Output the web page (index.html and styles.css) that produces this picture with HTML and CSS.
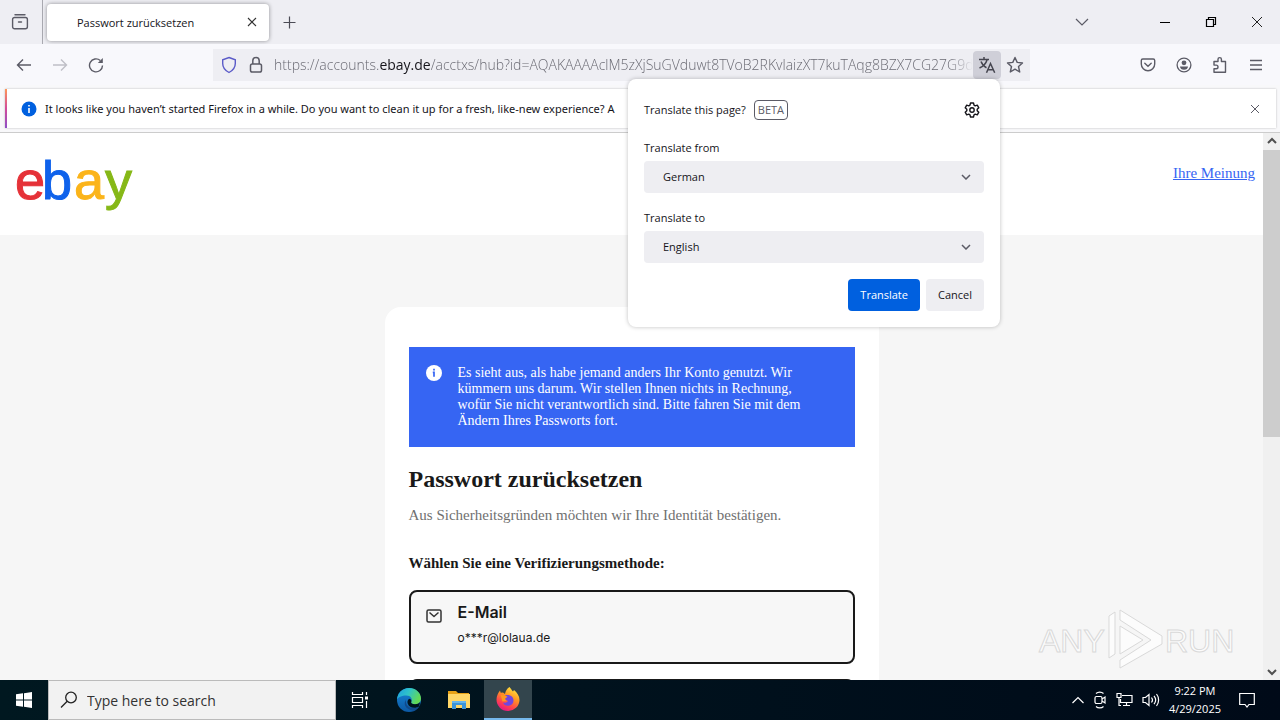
FILE: index.html
```html
<!DOCTYPE html>
<html lang="de">
<head>
  <meta charset="UTF-8" />
  <title>Passwort zurücksetzen</title>
  <link rel="stylesheet" href="styles.css">
</head>
<body>
  <div class="tabbar">
    <button class="icon-btn view-btn" aria-label="Firefox View">
      <svg width="18" height="18" viewBox="0 0 18 18" fill="none" stroke="#5b5b66" stroke-width="1.4" stroke-linecap="round"><path d="M4 1.7h10M3.6 4.5h10.8a2 2 0 0 1 2 2v7.3a2 2 0 0 1-2 2H3.6a2 2 0 0 1-2-2V6.500a2 2 0 0 1 2-2zM7.500 9h3"/></svg>
    </button>
    <div class="tab">
      <span>Passwort zurücksetzen</span>
      <button class="icon-btn" aria-label="Close tab">
        <svg width="10" height="10" viewBox="0 0 10 10" stroke="#333" stroke-width="1.1"><path d="M1 1l8 8M9 1l-8 8"/></svg>
      </button>
    </div>
    <button class="icon-btn new-tab" aria-label="New tab">
      <svg width="13" height="13" viewBox="0 0 13 13" stroke="#4b4b55" stroke-width="1.2"><path d="M6.500 0.500v12M0.500 6.500h12"/></svg>
    </button>
    <div class="window-buttons">
      <button class="icon-btn list-tabs" aria-label="List all tabs">
        <svg width="14" height="14" viewBox="0 0 14 14" fill="none" stroke="#5b5b66" stroke-width="1.2"><path d="M1 4l6 6 6-6"/></svg>
      </button>
      <button class="icon-btn" aria-label="Minimize">
        <svg width="12" height="12" viewBox="0 0 12 12" stroke="#000"><path d="M1 6.500h10"/></svg>
      </button>
      <button class="icon-btn" aria-label="Restore">
        <svg width="12" height="12" viewBox="0 0 12 12" fill="none" stroke="#000" stroke-width="1.2"><path d="M1.500 3.500h7v7h-7zM3.500 3.500v-2h7v7h-2"/></svg>
      </button>
      <button class="icon-btn" aria-label="Close">
        <svg width="12" height="12" viewBox="0 0 12 12" stroke="#222"><path d="M1 1l10 10M11 1L1 11"/></svg>
      </button>
    </div>
  </div>

  <div class="toolbar">
    <div class="nav">
      <button class="icon-btn" aria-label="Back">
        <svg width="16" height="16" viewBox="0 0 16 16" fill="none" stroke="#5b5b66" stroke-width="1.4"><path d="M15 8H1.500M7 2.500L1.500 8 7 13.500"/></svg>
      </button>
      <button class="icon-btn" aria-label="Forward" disabled>
        <svg width="16" height="16" viewBox="0 0 16 16" fill="none" stroke="#bfbfc6" stroke-width="1.4"><path d="M1 8h13.500M9 2.500L14.500 8 9 13.500"/></svg>
      </button>
      <button class="icon-btn" aria-label="Reload">
        <svg width="16" height="16" viewBox="0 0 16 16" fill="none" stroke="#5b5b66" stroke-width="1.4"><path d="M14.500 8.500A6.500 6.500 0 1 1 12.300 3.500"/><path d="M14.800 1v5H9.800z" fill="#5b5b66" stroke="none"/></svg>
      </button>
    </div>
    <div class="urlbar">
      <svg width="16" height="18" viewBox="0 0 16 18" fill="none" stroke="#5b5bc8" stroke-width="1.4"><path d="M8 1.500l6.300 2.300v3.700c0 4.200-2.800 7.200-6.300 9-3.500-1.800-6.300-4.800-6.300-9V3.800z"/></svg>
      <svg width="14" height="18" viewBox="0 0 14 18" fill="none" stroke="#5b5b66" stroke-width="1.500"><rect x="1.500" y="8" width="11" height="8" rx="1.800"/><path d="M3.800 8V4.800a3.200 3.200 0 0 1 6.400 0V8"/></svg>
      <div class="url">https://accounts.<b>ebay.de</b>/acctxs/hub?id=AQAKAAAAclM5zXjSuGVduwt8TVoB2RKvlaizXT7kuTAqg8BZX7CG27G9dH</div>
      <div class="translate">
        <button class="icon-btn translate-btn" aria-label="Translate this page">
          <svg width="18" height="18" viewBox="0 0 18 18" fill="none" stroke="#45454f" stroke-width="1.500"><path d="M1 3.500h10M6 1v2.500M9.200 3.500C8 7.500 5 10.500 1.500 12M3 5.500c1.200 3 3 5 5.500 6.200"/><path d="M8.500 16.800L12.500 7.500l4.200 9.300M10 13.800h5.200"/></svg>
        </button>
        <form class="panel">
          <div class="panel-head">
            <span>Translate this page?</span>
            <span class="beta">BETA</span>
            <button type="button" class="icon-btn" aria-label="Settings">
              <svg width="16" height="16" viewBox="0 0 16 16" fill="none" stroke="#15141a" stroke-width="1.400" stroke-linejoin="round"><path d="M6.500 1h3l.5 2.100 1.200.7 2.100-.6 1.500 2.600L13.200 7.300v1.400l1.600 1.500-1.500 2.600-2.100-.6-1.200.7-.5 2.100h-3L6 12.900l-1.200-.7-2.100.6-1.500-2.600L2.800 8.700V7.300L1.200 5.800l1.500-2.600 2.100.6L6 3.100z"/><circle cx="8" cy="8" r="2.200"/></svg>
            </button>
          </div>
          <label for="from">Translate from</label>
          <select id="from"><option>German</option></select>
          <label for="to">Translate to</label>
          <select id="to"><option>English</option></select>
          <div class="panel-buttons">
            <button type="button" class="primary">Translate</button>
            <button type="button">Cancel</button>
          </div>
        </form>
      </div>
      <button class="icon-btn star" aria-label="Bookmark">
        <svg width="18" height="18" viewBox="0 0 18 18" fill="none" stroke="#5b5b66" stroke-width="1.400" stroke-linejoin="round"><path d="M9 1.500l2.200 4.900 5.300.6-4 3.500 1.200 5.500L9 13.200 4.300 16l1.200-5.500-4-3.500 5.300-.6z"/></svg>
      </button>
    </div>
    <div class="tools">
      <button class="icon-btn" aria-label="Pocket">
        <svg width="16" height="16" viewBox="0 0 16 16" fill="none" stroke="#5b5b66" stroke-width="1.400" stroke-linecap="round"><path d="M2.800 2h10.400c.9 0 1.500.6 1.500 1.500V7a6.700 6.700 0 0 1-13.400 0V3.500c0-.9.600-1.500 1.500-1.500zM4.800 6.200L8 9.200l3.200-3"/></svg>
      </button>
      <button class="icon-btn" aria-label="Account">
        <svg width="16" height="16" viewBox="0 0 16 16"><circle cx="8" cy="8" r="6.900" fill="none" stroke="#5b5b66" stroke-width="1.300"/><circle cx="8" cy="5.800" r="2.400" fill="#5b5b66"/><path d="M4 9.500h8c0 2-1.800 3.300-4 3.300s-4-1.300-4-3.300z" fill="#5b5b66"/></svg>
      </button>
      <button class="icon-btn" aria-label="Extensions">
        <svg width="16" height="18" viewBox="0 0 16 18" fill="none" stroke="#5b5b66" stroke-width="1.400" stroke-linejoin="round"><path d="M2 5.500h4V3.300a1.700 1.700 0 0 1 3.400 0v2.200h4.100v10.700H2v-3.500h2.200a1.800 1.800 0 0 0 0-3.600H2z"/></svg>
      </button>
      <button class="icon-btn" aria-label="Menu">
        <svg width="14" height="14" viewBox="0 0 14 14" stroke="#5b5b66" stroke-width="1.300"><path d="M1 2.500h12M1 7h12M1 11.500h12"/></svg>
      </button>
    </div>
  </div>

  <div class="notification">
    <div class="message">
      <svg width="16" height="16" viewBox="0 0 16 16"><circle cx="8" cy="8" r="7.500" fill="#0060df"/><path d="M8 4v1.600M8 7v5" stroke="#fff" stroke-width="1.600"/></svg>
      <span>It looks like you haven’t started Firefox in a while. Do you want to clean it up for a fresh, like-new experience? A</span>
      <button class="icon-btn" aria-label="Dismiss">
        <svg width="10" height="10" viewBox="0 0 10 10" stroke="#5b5b66"><path d="M1 1l8 8M9 1l-8 8"/></svg>
      </button>
    </div>
  </div>

  <div class="viewport">
    <div class="page">
      <header>
        <a href="#" class="logo" aria-label="eBay">
          <svg width="124" height="68" viewBox="0 0 124 68" font-size="54"><text y="52" stroke-width="1"><tspan x="-1" fill="#e53238" stroke="#e53238">e</tspan><tspan x="26" fill="#0f62eb" stroke="#0f62eb">b</tspan><tspan x="58" fill="#fbb41a" stroke="#fbb41a">a</tspan><tspan x="89" fill="#86b817" stroke="#86b817">y</tspan></text></svg>
        </a>
        <a href="#" class="feedback">Ihre Meinung</a>
      </header>
      <main>
        <div class="card">
          <div class="notice">
            <svg width="16" height="16" viewBox="0 0 16 16"><circle cx="8" cy="8" r="8" fill="#fff"/><path d="M8 3.800v1.800M6.800 7.400H8v4.400" fill="none" stroke="#3665f3" stroke-width="1.700"/></svg>
            <p>Es sieht aus, als habe jemand anders Ihr Konto genutzt. Wir<br>kümmern uns darum. Wir stellen Ihnen nichts in Rechnung,<br>wofür Sie nicht verantwortlich sind. Bitte fahren Sie mit dem<br>Ändern Ihres Passworts fort.</p>
          </div>
          <h1>Passwort zurücksetzen</h1>
          <p class="lead">Aus Sicherheitsgründen möchten wir Ihre Identität bestätigen.</p>
          <h2>Wählen Sie eine Verifizierungsmethode:</h2>
          <button class="method">
            <svg width="16" height="14" viewBox="0 0 16 14" fill="none" stroke="#333" stroke-width="1.500" stroke-linejoin="round"><rect x="1" y="1" width="14" height="12" rx="1.500"/><path d="M3.500 3.500L8 7.500l4.500-4"/></svg>
            <span>
              <strong>E-Mail</strong>
              <span class="address">o***r@lolaua.de</span>
            </span>
          </button>
          <button class="method" aria-label="SMS"></button>
        </div>
      </main>
      <svg class="watermark" width="200" height="64" viewBox="0 0 200 64" fill="#fcfcfc" stroke="#d9d9d9" stroke-width="1" font-size="32">
        <text x="2" y="44">ANY</text>
        <text x="128" y="44">RUN</text>
        <path d="M72 50V8l6-4v42zM83 2l42 26v8L83 60v-8l31-20-31-20z"/>
        <path d="M83 18l23 14-23 14z"/>
      </svg>
    </div>
    <div class="scrollbar">
      <svg width="10" height="8" viewBox="0 0 10 8" fill="none" stroke="#505050" stroke-width="2"><path d="M1 6l4-4 4 4"/></svg>
      <div class="thumb"></div>
      <svg width="10" height="8" viewBox="0 0 10 8" fill="none" stroke="#505050" stroke-width="2"><path d="M1 2l4 4 4-4"/></svg>
    </div>
  </div>

  <footer class="taskbar">
    <button class="task" aria-label="Start">
      <svg width="16" height="16" viewBox="0 0 16 16" fill="#fff"><path d="M0 2.300l7-1v6.200H0zM8 1.200L16 0v7.500H8zM0 8.500h7v6.200l-7-1zM8 8.500h8V16l-8-1.200z"/></svg>
    </button>
    <div class="search">
      <svg width="18" height="18" viewBox="0 0 18 18" fill="none" stroke="#222" stroke-width="1.300"><circle cx="11" cy="6.500" r="5.300"/><path d="M7.200 10.300L1 16.500"/></svg>
      <input type="text" placeholder="Type here to search" aria-label="Search">
    </div>
    <button class="task" aria-label="Task view">
      <svg width="18" height="18" viewBox="0 0 18 18" fill="none" stroke="#fff" stroke-width="1.200"><path d="M1.500 1v2.500h10V1M1.500 6.500h10v5h-10zM1.500 17v-2.500h10V17M15.500 1v3M15.500 10v7"/><path d="M14 5.500h3v3h-3z" fill="#fff" stroke="none"/></svg>
    </button>
    <button class="task wide" aria-label="Microsoft Edge">
      <svg width="24" height="24" viewBox="0 0 24 24">
        <defs>
          <linearGradient id="edgeTop" x1="0" y1="0" x2="1" y2=".4"><stop offset="0" stop-color="#1b9de2"/><stop offset=".5" stop-color="#2fc3c9"/><stop offset="1" stop-color="#62d957"/></linearGradient>
          <linearGradient id="edgeLow" x1="0" y1="0" x2="0" y2="1"><stop offset="0" stop-color="#1787d8"/><stop offset="1" stop-color="#0c59a4"/></linearGradient>
        </defs>
        <circle cx="12" cy="12" r="12" fill="url(#edgeLow)"/>
        <path d="M0 11.500C.5 5 5.500 0 12 0c7 0 12 5 12 10.500 0 3.800-2.800 5.800-6 5.800-3 0-4.300-1.200-3.800-2.200 1.800-3-.5-6.600-4.700-6.600C4.500 7.500 1 9.500 0 11.500z" fill="url(#edgeTop)"/>
        <path d="M9 11.500c-1 5 2.500 8.500 7.500 8.500 2.300 0 4.300-.8 5.500-1.500-.9 1.500-2.300 3.200-4.200 4.200C11 22.500 5 18 9 11.500z" fill="#114a8b"/>
        <path d="M14.200 14.100c-.5 1 .8 2.200 3.800 2.200 2 0 4-.8 5-2.200l-.8 4.200c-3.500 2.500-10 2-11.500-2.800-.7-2 .2-3.900 1.600-4.800 1.800.4 2.600 2 1.900 3.400z" fill="#00141d"/>
      </svg>
    </button>
    <button class="task wide" aria-label="File Explorer">
      <svg width="22" height="20" viewBox="0 0 22 20"><path d="M0 1h8l2 2h11v5H0z" fill="#e8a317"/><path d="M0 4h22v14H0z" fill="#ffd767"/><path d="M4 11h14v8h-4v-4H8v4H4z" fill="#3b94d9"/><path d="M4 11h14v2H4z" fill="#65b5ed"/></svg>
    </button>
    <button class="task active" aria-label="Firefox">
      <svg width="24" height="24" viewBox="0 0 24 24">
        <defs><linearGradient id="fox" x1=".8" y1="0" x2=".3" y2="1"><stop offset="0" stop-color="#fff044"/><stop offset=".4" stop-color="#ff9722"/><stop offset=".75" stop-color="#ff4050"/><stop offset="1" stop-color="#e31587"/></linearGradient></defs>
        <path d="M13.500 0c1.500 1.500 2 3 3.500 4.500l1-1.500c3 2.500 5.500 6 5.500 10A11.300 11.300 0 0 1 12 24 11.400 11.400 0 0 1 .5 12.500C.5 9 2 6 4 3.500l.7 2.300 2.300-.3L9 7c.500-3 2-5.500 4.500-7z" fill="url(#fox)"/>
        <path d="M9 8.500c4-1.500 8.500.5 8.500 5a5.500 5.500 0 0 1-10.500 2c2 .8 4 .2 5-1.500l-4.500-2z" fill="#7046df"/>
        <path d="M4.700 8l4.500.5 2.300 1.200-2.500 2.100 1.500 2.200-4 .500z" fill="#ff9a1f"/>
      </svg>
    </button>
    <div class="tray">
      <svg width="12" height="12" viewBox="0 0 12 12" fill="none" stroke="#fff" stroke-width="1.200"><path d="M.5 9L6 3.500 11.500 9"/></svg>
      <svg width="14" height="18" viewBox="0 0 14 18" fill="none" stroke="#fff" stroke-width="1.200"><rect x="2" y="5.500" width="7" height="7" rx="1.500"/><path d="M9 8l3-2v6l-3-2M3 2.500c2-1.800 5.500-1.800 7.500 0M3 15.500c2 1.800 5.500 1.800 7.500 0"/></svg>
      <svg width="17" height="16" viewBox="0 0 17 16" fill="none" stroke="#fff" stroke-width="1.200"><path d="M6 3.500h10v7H4.500V7M10.500 10.500v3M7 13.500h7M1 1.500h4v4H1zM3 5.500v8h2"/></svg>
      <svg width="18" height="16" viewBox="0 0 18 16" fill="none" stroke="#fff" stroke-width="1.200"><path d="M1 5.500h2.500L7 2.500v11l-3.500-3H1zM9.500 5.500c1.200 1.500 1.200 3.500 0 5M12 3.800c2 2.500 2 5.900 0 8.400M14.500 2c2.800 3.500 2.800 8.500 0 12"/></svg>
      <div class="clock">9:22 PM<br>4/29/2025</div>
      <svg class="action" width="16" height="16" viewBox="0 0 16 16" fill="none" stroke="#fff" stroke-width="1.200"><path d="M.7 1.500h14.600v11H10l-2 2.500-2-2.500H.7z"/></svg>
    </div>
  </footer>
</body>
</html>
```

FILE: styles.css
```css
* { box-sizing: border-box; }
body {
  margin: 0;
  height: 100vh;
  display: flex;
  flex-direction: column;
  overflow: hidden;
  font-family: "Open Sans", "Noto Sans", sans-serif;
  font-size: 11px;
  color: #15141a;
}
button, select, input {
  font: inherit;
  color: inherit;
}
svg { flex: none; display: block; }
.icon-btn {
  display: flex;
  align-items: center;
  justify-content: center;
  padding: 0;
  border: none;
  background: none;
}

/* tab strip */
.tabbar {
  display: flex;
  align-items: center;
  height: 44px;
  flex: none;
  background: #eeeef3;
}
.view-btn {
  width: 43px;
  height: 44px;
  padding-right: 3px;
  border-right: 1px solid #a9a9b0;
}
.tab {
  display: flex;
  align-items: center;
  justify-content: space-between;
  width: 222px;
  height: 37px;
  margin-left: 4px;
  padding: 0 12px 0 30px;
  background: #fff;
  border-radius: 4px;
  box-shadow: 0 0 4px rgba(0, 0, 0, 0.4);
}
.new-tab { margin-left: 14px; }
.window-buttons {
  display: flex;
  margin-left: auto;
}
.window-buttons .icon-btn { width: 46px; }
.window-buttons .list-tabs { margin-right: 37px; }

/* toolbar */
.toolbar {
  display: flex;
  align-items: center;
  height: 41px;
  flex: none;
  background: #f8f8fc;
}
.nav {
  display: flex;
  width: 213px;
  padding-left: 6px;
}
.nav .icon-btn { width: 36px; height: 32px; }
.urlbar {
  flex: 1;
  min-width: 0;
  display: flex;
  align-items: center;
  height: 32px;
  padding: 0 1px 0 8px;
  background: #eeeef3;
}
.urlbar > svg { margin-right: 12px; }
.urlbar > svg + svg { margin-right: 11px; }
.url {
  flex: 1;
  min-width: 0;
  overflow: hidden;
  white-space: nowrap;
  font-size: 14px;
  font-weight: 300;
  color: #6b6b74;
  mask-image: linear-gradient(to left, transparent, #000 24px);
}
.url b { font-weight: normal; color: #15141a; }
.translate { position: relative; }
.translate-btn {
  width: 28px;
  height: 28px;
  border-radius: 4px;
  background: #cfcfd8;
}
.star { width: 28px; height: 28px; }
.tools {
  display: flex;
  width: 250px;
  padding-left: 100px;
}
.tools .icon-btn { width: 36px; height: 32px; }

/* translation panel */
.panel {
  position: absolute;
  z-index: 2;
  top: 100%;
  right: 1px;
  width: 372px;
  padding: 16px;
  background: #fff;
  border-radius: 8px;
  box-shadow: 0 0 4px rgba(0, 0, 0, 0.25);
}
.panel-head {
  display: flex;
  align-items: center;
  gap: 8px;
  height: 30px;
  margin-bottom: 14px;
}
.panel-head .icon-btn { margin-left: auto; margin-right: 4px; }
.beta {
  padding: 0 3px;
  border: 1px solid #5b5b66;
  border-radius: 4px;
  line-height: 18px;
  color: #5b5b66;
}
.panel label {
  display: block;
  line-height: 18px;
  margin-bottom: 4px;
}
.panel select {
  display: block;
  width: 100%;
  height: 32px;
  margin-bottom: 16px;
  padding: 0 19px;
  border: none;
  border-radius: 4px;
  appearance: none;
  background: #eeeef2 url("data:image/svg+xml,%3Csvg xmlns='http://www.w3.org/2000/svg' width='10' height='6' fill='none' stroke='%235b5b66' stroke-width='1.5'%3E%3Cpath d='M1 1l4 4 4-4'/%3E%3C/svg%3E") no-repeat right 13px center;
}
.panel-buttons {
  display: flex;
  justify-content: flex-end;
  gap: 6px;
}
.panel-buttons button {
  height: 32px;
  padding: 0 12px;
  border: none;
  border-radius: 4px;
  background: #eeeef2;
}
.panel-buttons .primary { background: #0060df; color: #fff; }

/* notification bar */
.notification {
  flex: none;
  padding: 4px 4px 4px 5px;
  background: #f8f8fa;
  border-bottom: 1px solid #ccc;
}
.message {
  display: flex;
  align-items: center;
  gap: 8px;
  height: 39px;
  padding: 0 16px 0 14px;
  font-family: "Noto Sans", sans-serif;
  background: #fff;
  border-left: 2px solid;
  border-image: linear-gradient(#ff9a55, #d24b9a, #8b50c8) 1;
  box-shadow: 0 0 2px rgba(0, 0, 0, 0.25);
}
.message .icon-btn { margin-left: auto; }

/* web page */
.viewport {
  flex: 1;
  min-height: 0;
  display: flex;
}
.page {
  position: relative;
  flex: 1;
  overflow: hidden;
  background: #f6f6f6;
  font-family: "Liberation Serif", serif;
  color: #191919;
}
header {
  display: flex;
  justify-content: space-between;
  align-items: flex-start;
  height: 102px;
  padding: 14px 8px 0 16px;
  background: #fff;
}
.logo { font-family: "Liberation Sans", sans-serif; }
.feedback {
  margin-top: 18px;
  font-size: 15px;
  color: #3665f3;
}
main {
  display: flex;
  justify-content: center;
  padding-top: 72px;
}
.card {
  width: 494px;
  padding: 40px 24px;
  background: #fff;
  border-radius: 16px;
}
.notice {
  display: flex;
  gap: 16px;
  padding: 18px 17px;
  background: #3665f3;
  color: #fff;
  font-size: 14px;
  line-height: 16px;
}
.notice p { margin: 0; }
h1 {
  margin: 18px 0 12px;
  font-size: 24px;
  line-height: 28px;
}
.lead {
  margin: 0 0 28px;
  font-size: 15px;
  line-height: 20px;
  color: #707070;
}
h2 {
  margin: 0 0 17px;
  font-size: 15px;
  line-height: 20px;
}
.method {
  display: flex;
  align-items: flex-start;
  gap: 16px;
  width: 100%;
  height: 74px;
  margin-bottom: 15px;
  padding: 8px 15px;
  text-align: left;
  font-family: Inter, sans-serif;
  background: #f7f7f7;
  border: 2px solid #191919;
  border-radius: 8px;
}
.method svg { margin-top: 9px; }
.method strong {
  display: block;
  font-size: 16px;
  font-weight: 600;
  line-height: 24px;
}
.address {
  display: block;
  font-size: 12px;
  line-height: 28px;
}
.watermark {
  position: absolute;
  right: 26px;
  bottom: 8px;
  font-family: "Liberation Sans", sans-serif;
}
.scrollbar {
  display: flex;
  flex-direction: column;
  align-items: center;
  width: 17px;
  padding: 4px 0;
  background: #f0f0f0;
}
.thumb {
  width: 17px;
  height: 287px;
  margin: 5px 0 auto;
  background: #cdcdcd;
}

/* taskbar */
.taskbar {
  display: flex;
  flex: none;
  height: 40px;
  background: linear-gradient(to right, #001820, #00101c 60%, #000a18);
  color: #fff;
}
.task {
  display: flex;
  align-items: center;
  justify-content: center;
  width: 48px;
  padding: 0;
  border: none;
  background: none;
}
.task.wide { width: 50px; }
.task.active {
  background: #33454d;
  border-bottom: 2px solid #76b9ed;
}
.search {
  display: flex;
  align-items: center;
  gap: 9px;
  width: 288px;
  padding-left: 11px;
  background: #f2f2f2;
  border: 1px solid #bbb;
  color: #333;
}
.search input {
  flex: 1;
  min-width: 0;
  padding: 0;
  border: none;
  outline: none;
  background: none;
  font-size: 14px;
}
.search input::placeholder { color: #333; opacity: 1; }
.tray {
  display: flex;
  align-items: center;
  gap: 9px;
  margin-left: auto;
  padding-right: 25px;
}
.clock {
  text-align: center;
  line-height: 18px;
}
.action { margin-left: 9px; }
```
